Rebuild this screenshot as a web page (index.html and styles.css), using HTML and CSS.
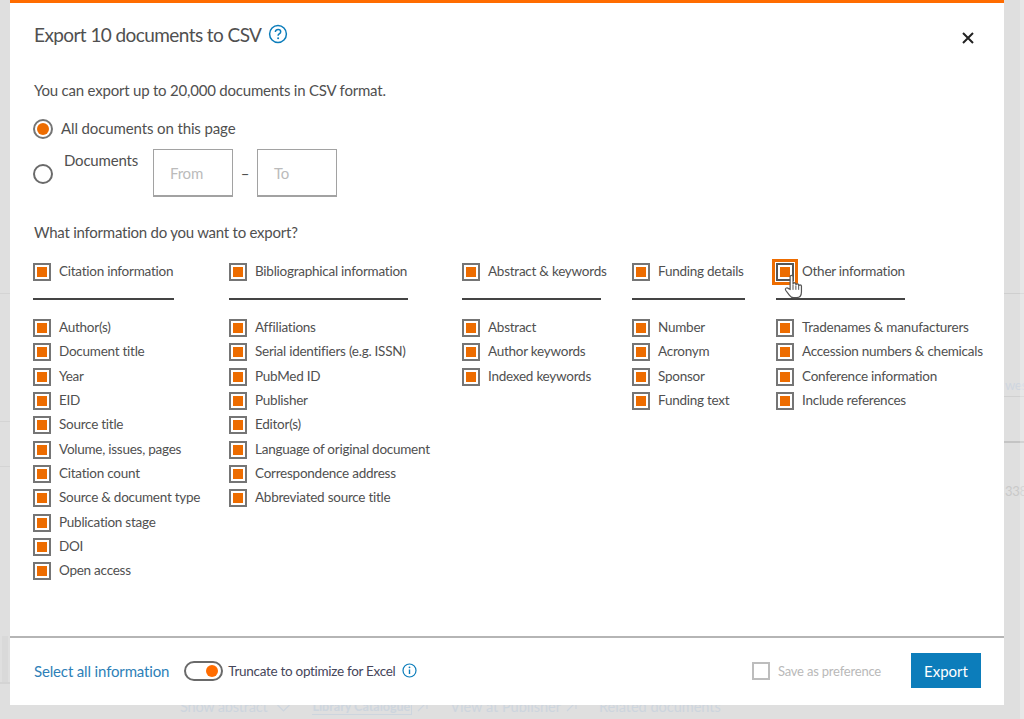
FILE: index.html
```html
<!DOCTYPE html>
<html lang="en">
<head>
    <meta charset="UTF-8">
    <meta name="viewport" content="width=device-width, initial-scale=1.0">
    <title>Export to CSV</title>
    <link rel="stylesheet" href="styles.css">
</head>
<body>

    <div class="backdrop">
        <div class="backdrop-links">
            <span class="back-link">Show abstract
                <svg class="chevron" width="13" height="8" viewBox="0 0 13 8"><path d="M.5 1l6 6 6-6" fill="none" stroke="#cdd5de" stroke-width="1.200"/></svg>
            </span>
            <span class="back-link"><span class="catalogue">Library Catalogue</span>
                <svg width="11" height="11" viewBox="0 0 11 11"><path d="M1 10l9-9M3 1h7v7" fill="none" stroke="#cdd5de" stroke-width="1.200"/></svg>
            </span>
            <span class="back-link">View at Publisher
                <svg width="11" height="11" viewBox="0 0 11 11"><path d="M1 10l9-9M3 1h7v7" fill="none" stroke="#cdd5de" stroke-width="1.200"/></svg>
            </span>
            <span class="back-link">Related documents</span>
        </div>
        <div class="side-line side-1"></div>
        <div class="side-line side-2"></div>
        <div class="side-line side-3"></div>
        <div class="side-line side-4"></div>
        <div class="side-box"></div>
        <div class="backdrop-line line-1"></div>
        <div class="backdrop-text text-1">wes</div>
        <div class="backdrop-line line-2"></div>
        <div class="backdrop-line line-3"></div>
        <div class="backdrop-text text-2">338</div>
    </div>

    <div class="modal">
        <div class="modal-main">
            <div class="modal-head">
                <h2>Export 10 documents to CSV</h2>
                <svg class="help-icon" width="20" height="20" viewBox="0 0 20 20">
                    <circle cx="10" cy="10" r="8.400" fill="none" stroke="#0c7dbb" stroke-width="1.500"/>
                    <path d="M7.400 8c0-1.600 1.200-2.500 2.700-2.500s2.600.9 2.600 2.200c0 1.200-.8 1.700-1.500 2.200-.7.500-1.100.9-1.100 1.800" fill="none" stroke="#0c7dbb" stroke-width="1.500"/>
                    <circle cx="10.100" cy="14.200" r="1" fill="#0c7dbb"/>
                </svg>
                <svg class="close-icon" width="12" height="12" viewBox="0 0 12 12">
                    <path d="M1 1l10 10M11 1L1 11" stroke="#222" stroke-width="2"/>
                </svg>
            </div>

            <p class="intro">You can export up to 20,000 documents in CSV format.</p>

            <div class="radio-row">
                <span class="radio checked"></span>
                <span class="radio-label">All documents on this page</span>
            </div>
            <div class="range-row">
                <span class="radio"></span>
                <span class="range-label">Documents</span>
                <div class="range-box">From</div>
                <span class="range-dash">–</span>
                <div class="range-box">To</div>
            </div>

            <p class="question">What information do you want to export?</p>

            <div class="columns">
                <div class="column col-citation">
                    <div class="group-head"><span class="check"></span>Citation information</div>
                    <div class="item"><span class="check"></span>Author(s)</div>
                    <div class="item"><span class="check"></span>Document title</div>
                    <div class="item"><span class="check"></span>Year</div>
                    <div class="item"><span class="check"></span>EID</div>
                    <div class="item"><span class="check"></span>Source title</div>
                    <div class="item"><span class="check"></span>Volume, issues, pages</div>
                    <div class="item"><span class="check"></span>Citation count</div>
                    <div class="item"><span class="check"></span>Source &amp; document type</div>
                    <div class="item"><span class="check"></span>Publication stage</div>
                    <div class="item"><span class="check"></span>DOI</div>
                    <div class="item"><span class="check"></span>Open access</div>
                </div>
                <div class="column col-biblio">
                    <div class="group-head"><span class="check"></span>Bibliographical information</div>
                    <div class="item"><span class="check"></span>Affiliations</div>
                    <div class="item"><span class="check"></span>Serial identifiers (e.g. ISSN)</div>
                    <div class="item"><span class="check"></span>PubMed ID</div>
                    <div class="item"><span class="check"></span>Publisher</div>
                    <div class="item"><span class="check"></span>Editor(s)</div>
                    <div class="item"><span class="check"></span>Language of original document</div>
                    <div class="item"><span class="check"></span>Correspondence address</div>
                    <div class="item"><span class="check"></span>Abbreviated source title</div>
                </div>
                <div class="column col-abstract">
                    <div class="group-head"><span class="check"></span>Abstract &amp; keywords</div>
                    <div class="item"><span class="check"></span>Abstract</div>
                    <div class="item"><span class="check"></span>Author keywords</div>
                    <div class="item"><span class="check"></span>Indexed keywords</div>
                </div>
                <div class="column col-funding">
                    <div class="group-head"><span class="check"></span>Funding details</div>
                    <div class="item"><span class="check"></span>Number</div>
                    <div class="item"><span class="check"></span>Acronym</div>
                    <div class="item"><span class="check"></span>Sponsor</div>
                    <div class="item"><span class="check"></span>Funding text</div>
                </div>
                <div class="column col-other">
                    <div class="group-head"><span class="check focused"></span>Other information
                        <svg class="hand" width="20" height="27" viewBox="0 0 18 24">
                            <path d="M5.500 14.500V3.200c0-1.700 2.600-1.700 2.600 0v6.600c0-1.500 2.600-1.500 2.600 0v.8c0-1.400 2.500-1.400 2.500 0v.9c0-1.300 2.500-1.300 2.500 0v5.200c0 2.900-1.300 5.300-4.300 5.300H8.600c-1.800 0-2.900-.9-3.800-2.200L1.500 15.400c-1-1.600 1.100-3 2.300-1.700z" fill="#fff" stroke="#555" stroke-width="1.100"/>
                            <path d="M8.100 10v5M10.700 11v4M13.200 11.500V15" stroke="#555" stroke-width=".9" fill="none"/>
                        </svg>
                    </div>
                    <div class="item"><span class="check"></span>Tradenames &amp; manufacturers</div>
                    <div class="item"><span class="check"></span>Accession numbers &amp; chemicals</div>
                    <div class="item"><span class="check"></span>Conference information</div>
                    <div class="item"><span class="check"></span>Include references</div>
                </div>
            </div>
        </div>

        <div class="modal-foot">
            <span class="select-all">Select all information</span>
            <span class="toggle"><span class="toggle-dot"></span></span>
            <span class="truncate">Truncate to optimize for Excel</span>
            <svg class="info-icon" width="15" height="15" viewBox="0 0 15 15">
                <circle cx="7.500" cy="7.500" r="6.500" fill="none" stroke="#0c7dbb" stroke-width="1.200"/>
                <path d="M7.500 6.500v4.500" stroke="#0c7dbb" stroke-width="1.400"/>
                <circle cx="7.500" cy="4.300" r=".9" fill="#0c7dbb"/>
            </svg>
            <span class="pref-box"></span>
            <span class="pref-label">Save as preference</span>
            <button class="export-btn">Export</button>
        </div>
    </div>

</body>
</html>
```

FILE: styles.css
```css
* {
    box-sizing: border-box;
}

html, body {
    margin: 0;
    height: 100%;
    overflow: hidden;
}

body {
    font-family: Lato, "Open Sans", sans-serif;
    font-size: 13.500px;
    letter-spacing: -0.25px;
    color: #505050;
    background: #dfdfdf;
    position: relative;
}

/* page behind the dialog, only the edges show */
.backdrop {
    position: absolute;
    inset: 0;
    overflow: hidden;
    color: #cdd5de;
}

.backdrop::after {
    content: "";
    position: absolute;
    top: 0;
    bottom: 0;
    left: 1020px;
    right: 0;
    background: rgba(255, 255, 255, 0.25);
}

.backdrop-links {
    position: absolute;
    top: 698px;
    left: 180px;
    display: flex;
    gap: 22px;
    font-size: 14.500px;
    letter-spacing: 0;
}

.back-link {
    display: flex;
    align-items: center;
    gap: 5px;
}

.back-link:first-child {
    letter-spacing: -0.2px;
}

.chevron {
    margin-left: 5px;
    margin-top: 3px;
}

.catalogue {
    font-weight: bold;
    font-size: 12.500px;
    border: 1px solid #cdd5de;
    border-top: none;
    border-left: none;
    padding: 0 1px 0 0;
}

.side-line {
    position: absolute;
    left: 0;
    width: 10px;
    height: 1px;
    background: #d4d4d4;
}

.side-1 { top: 293px; }
.side-2 { top: 421px; }
.side-3 { top: 466px; }
.side-4 { top: 682px; height: 2px; }

.side-box {
    position: absolute;
    left: 2px;
    top: 636px;
    width: 6px;
    height: 46px;
    background: #d9d9d9;
}

.backdrop-line {
    position: absolute;
    left: 1004px;
    right: 0;
    height: 1px;
    background: #cfcfcf;
}

.line-1 { top: 293px; }
.line-2 { top: 396px; background: #d0d0d0; }
.line-3 { top: 441px; height: 2px; background: #c4c4c4; }

.backdrop-text {
    position: absolute;
    left: 1005px;
    font-size: 13px;
    color: #c9c9c9;
    white-space: nowrap;
}

.text-1 { top: 377px; color: #cfd6df; }
.text-2 { top: 483px; }

.modal {
    position: absolute;
    left: 10px;
    top: 0;
    width: 994px;
    height: 705px;
    background: #ffffff;
    border-top: 3px solid #ff6c00;
    display: flex;
    flex-direction: column;
}

.modal-main {
    flex: 1;
    padding: 0 24px;
    border-bottom: 2px solid #b5b5b5;
}

.modal-head {
    display: flex;
    align-items: center;
    height: 26px;
    margin-top: 18px;
}

.modal-head h2 {
    margin: 0;
    font-size: 19px;
    font-weight: 400;
    letter-spacing: -0.58px;
    color: #505050;
}

.help-icon {
    margin-left: 7px;
}

.close-icon {
    margin-left: auto;
    margin-right: 6px;
    margin-top: 7px;
}

.intro {
    margin: 33px 0 0;
    font-size: 15px;
    letter-spacing: -0.21px;
    line-height: 20px;
}

.radio-row {
    display: flex;
    align-items: center;
    gap: 8px;
    margin-top: 19px;
    margin-left: -1px;
    height: 20px;
    font-size: 15px;
    letter-spacing: -0.12px;
}

.radio-label {
    margin-top: -2px;
}

.radio {
    display: block;
    flex: none;
    width: 20px;
    height: 20px;
    border: 2px solid #6a6a6a;
    border-radius: 50%;
    background: #fff;
}

.radio.checked {
    border-color: #757575;
    padding: 2px;
    background: #ed6c00 content-box;
}

.range-row {
    display: flex;
    align-items: center;
    margin-top: 10px;
    margin-left: -1px;
    height: 48px;
    font-size: 15px;
    letter-spacing: -0.2px;
}

.range-row .radio {
    margin-top: 1px;
}

.range-label {
    margin-left: 11px;
    width: 89px;
    margin-top: -26px;
}

.range-box {
    width: 80px;
    height: 48px;
    border: 1px solid #a2a2a2;
    border-bottom-width: 2px;
    padding: 14px 0 0 16px;
    font-size: 15px;
    line-height: 18px;
    color: #bbbbbb;
}

.range-dash {
    width: 24px;
    text-align: center;
}

.question {
    margin: 25px 0 0;
    font-size: 15px;
    letter-spacing: -0.24px;
    line-height: 20px;
}

.columns {
    display: grid;
    grid-template-columns: 195px 233px 170px 144px 1fr;
    margin-top: 16px;
}

.col-citation {
    margin-left: -1px;
}

.group-head {
    position: relative;
    display: flex;
    align-items: center;
    height: 42px;
    padding-bottom: 14px;
    margin-bottom: 15px;
    border-bottom: 2px solid #444444;
    white-space: nowrap;
}

.col-citation .group-head { width: 141px; }
.col-biblio .group-head { width: 179px; }
.col-abstract .group-head { width: 139px; }
.col-funding .group-head { width: 113px; }
.col-other .group-head { width: 129px; }

.item {
    display: flex;
    align-items: center;
    height: 24.300px;
    white-space: nowrap;
}

.check {
    flex: none;
    width: 18px;
    height: 18px;
    margin-top: 2px;
    margin-right: 8px;
    border: 2px solid #757575;
    padding: 2px;
    background: #ed6c00 content-box;
}

.check.focused {
    border-color: #555555;
    outline: 3px solid #ed6c00;
    outline-offset: 1px;
}

.hand {
    position: absolute;
    left: 8px;
    top: 15px;
}

.modal-foot {
    display: flex;
    align-items: center;
    height: 67px;
    padding: 0 23px 2px 24px;
}

.select-all {
    font-size: 15px;
    letter-spacing: -0.15px;
    color: #2e7fb8;
}

.toggle {
    display: block;
    width: 39px;
    height: 20px;
    margin-left: 15px;
    border: 2px solid #6a6a6a;
    border-radius: 10px;
    position: relative;
}

.toggle-dot {
    position: absolute;
    right: 3px;
    top: 2px;
    width: 12px;
    height: 12px;
    border-radius: 50%;
    background: #ff6c00;
}

.truncate {
    margin-left: 5px;
    font-size: 13.500px;
    letter-spacing: -0.3px;
    color: #46465a;
}

.info-icon {
    margin-left: 7px;
}

.pref-box {
    width: 18px;
    height: 18px;
    margin-left: auto;
    border: 2px solid #bdbdbd;
}

.pref-label {
    margin-left: 8px;
    font-size: 13px;
    letter-spacing: -0.2px;
    color: #b9b9b9;
}

.export-btn {
    width: 70px;
    height: 35px;
    margin-left: 30px;
    border: none;
    background: #0c7dbb;
    color: #ffffff;
    font-family: inherit;
    font-size: 15px;
}
```
